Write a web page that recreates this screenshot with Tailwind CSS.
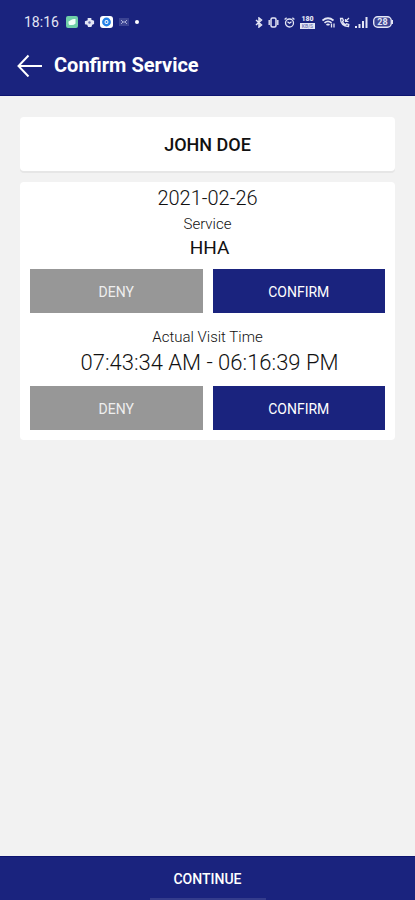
<!DOCTYPE html>
<html lang="en">
<head>
    <meta charset="UTF-8">
    <meta name="viewport" content="width=device-width, initial-scale=1.0">
    <title>Confirm Service</title>
    <script src="https://cdn.jsdelivr.net/npm/@tailwindcss/browser@4"></script>
</head>
<body class="min-h-screen flex flex-col bg-[#f2f2f2] font-['Roboto',sans-serif] text-[#111111]">
    <!-- Header -->
    <header class="bg-[#1a237e] text-white border-b border-[#0d1470]">
        <!-- Status Bar -->
        <div class="flex items-center justify-between h-11 pl-6 pr-[22px] text-[#e4e6f5]">
            <div class="flex items-center">
                <span class="text-sm leading-5 mr-[7px]">18:16</span>
                <svg class="w-3 h-3 mr-[6px]" viewBox="0 0 12 12">
                    <rect width="12" height="12" rx="2" fill="#6fcfa8"/>
                    <path d="M2.500 5.500Q4 4.500 5 4q2-1.500 4.500-1V7.500Q8 9 6 9H3.500Q2.500 8.500 2.500 7z" fill="#f1fff8"/>
                </svg>
                <svg class="w-[11px] h-[11px] mr-[5px]" viewBox="0 0 12 12" fill="#e4e6f5">
                    <path d="M4 1h4v2l3 1v3.500L9 8.500 8 11H4.500L3.500 8.500 1 8V4.500L4 3.500z"/>
                    <circle cx="6" cy="6" r="1.300" fill="#6870b0"/>
                </svg>
                <svg class="w-[13px] h-3 mr-[6px]" viewBox="0 0 13 12">
                    <rect width="13" height="12" rx="3" fill="#fff"/>
                    <circle cx="6.500" cy="6" r="3.200" fill="none" stroke="#2583e8" stroke-width="2.400"/>
                    <circle cx="6.500" cy="6" r="1" fill="#2583e8"/>
                </svg>
                <svg class="w-[10px] h-[10px] mr-[6px]" viewBox="0 0 10 10">
                    <rect y="1" width="10" height="8" fill="#3b4392"/>
                    <path d="M2 3l2 2-2 2M8 3L6 5l2 2M4 5h2" fill="none" stroke="#a7acd6"/>
                </svg>
                <svg class="w-1 h-1" viewBox="0 0 4 4"><circle cx="2" cy="2" r="2" fill="#fff"/></svg>
            </div>
            <div class="flex items-center">
                <svg class="w-2 h-[11px] mr-[5px]" viewBox="0 0 8 11" fill="none" stroke="currentColor" stroke-width="1.500">
                    <path d="M1 3l5.500 5L4 10V1l2.500 2L1 8"/>
                </svg>
                <svg class="w-[11px] h-[11px] mr-[5px]" viewBox="0 0 11 11" fill="none" stroke="currentColor">
                    <rect x="3" y="1" width="5" height="9" rx="1.500" stroke-width="1.500"/>
                    <path d="M1.200 3v5M9.800 3v5" stroke-width="1.400"/>
                </svg>
                <svg class="w-[11px] h-[11px] mr-[5px]" viewBox="0 0 11 11" fill="none" stroke="currentColor" stroke-width="1.300">
                    <circle cx="5.500" cy="6" r="4"/>
                    <path d="M.6 2.500L2.600.8M10.400 2.500L8.400.8M3.500 4.800l2 1.500 2-1.500"/>
                </svg>
                <svg class="w-[15px] h-[13px] mr-[7px]" viewBox="0 0 15 13" fill="currentColor">
                    <rect y="7" width="15" height="6"/>
                    <text x="7.500" y="5" text-anchor="middle" font-size="7" font-weight="900">180</text>
                    <text x="7.500" y="12" text-anchor="middle" font-size="5" font-weight="700" fill="#7f86bf">KB/S</text>
                </svg>
                <svg class="w-[13px] h-[11px] mr-1" viewBox="0 0 13 11" fill="none" stroke="currentColor" stroke-width="1.700">
                    <path d="M.5 3.500q5.500-4.500 11 0M2.500 5.800q3.500-2.800 7 0M4.500 8q1.500-1.200 3 0"/>
                    <path d="M9.500 10.500V6.500M12 6.500v4" stroke-width="1.300"/>
                </svg>
                <svg class="w-[11px] h-[11px] mr-[5px]" viewBox="0 0 11 11" fill="none" stroke="currentColor">
                    <path d="M1.500 1.500q0 7.500 8 8L9.800 7.500 7.500 6.800 6.500 7.800Q4 6.500 3.500 4.500l1-1L3.500 1.500z" stroke-width="1.300"/>
                    <path d="M10 1L6.500 4.500M6.500 2v2.500H9.500" stroke-width="1.200"/>
                </svg>
                <svg class="w-[13px] h-[11px] mr-[5px]" viewBox="0 0 13 11" fill="currentColor">
                    <rect y="9" width="2" height="2"/>
                    <rect x="3.500" y="7" width="2" height="4"/>
                    <rect x="7" y="4" width="2" height="7"/>
                    <rect x="10.500" y="0" width="2" height="11"/>
                </svg>
                <svg class="w-5 h-3" viewBox="0 0 20 12">
                    <rect x=".7" y=".7" width="17.600" height="10.600" rx="4" fill="#3b4392" stroke="currentColor" stroke-width="1.400"/>
                    <rect x="18.600" y="4" width="1.400" height="4" fill="currentColor"/>
                    <text x="9.500" y="9.200" text-anchor="middle" font-size="9" font-weight="700" fill="currentColor">28</text>
                </svg>
            </div>
        </div>
        <!-- Title Bar -->
        <div class="flex items-center h-[42px] mb-[9px] pl-[17px]">
            <button type="button" aria-label="Back" class="mr-3">
                <svg class="w-[25px] h-6" viewBox="0 0 25 24" fill="none" stroke="currentColor" stroke-width="2">
                    <path d="M25 13H2M11.500 2.500L1.500 13l10 10.500"/>
                </svg>
            </button>
            <h1 class="text-xl leading-6 font-bold">Confirm Service</h1>
        </div>
    </header>

    <!-- Main Content -->
    <main class="flex-1 flex flex-col gap-[11px] px-5 pt-[21px]">
        <div class="bg-white rounded-sm shadow-[0_2px_0_#e6e6e6] pt-4 pb-[14px] text-center">
            <h2 class="text-lg leading-6 font-medium">JOHN DOE</h2>
        </div>

        <section class="bg-white rounded-sm px-[10px] pt-1 pb-[10px] text-center">
            <p class="text-xl leading-6 font-light">2021-02-26</p>
            <p class="text-[15px] leading-6 mt-[2px] font-light">Service</p>
            <p class="text-[19px] leading-6 pl-1">HHA</p>
            <div class="grid grid-cols-2 gap-[10px] mt-[9px]">
                <button type="button" class="h-11 pt-[2px] bg-[#979797] text-[#eeeeee] text-sm">DENY</button>
                <button type="button" class="h-11 pt-[2px] bg-[#1a237e] text-white text-sm">CONFIRM</button>
            </div>

            <p class="text-[15px] leading-6 mt-3 font-light">Actual Visit Time</p>
            <p class="text-[22px] leading-6 mt-[2px] pl-1 font-light">07:43:34 AM - 06:16:39 PM</p>
            <div class="grid grid-cols-2 gap-[10px] mt-[11px]">
                <button type="button" class="h-11 pt-[2px] bg-[#979797] text-[#eeeeee] text-sm">DENY</button>
                <button type="button" class="h-11 pt-[2px] bg-[#1a237e] text-white text-sm">CONFIRM</button>
            </div>
        </section>
    </main>

    <!-- Footer -->
    <footer class="bg-[#1a237e] border-t border-[#0d1470]">
        <button type="button" class="block w-full h-[41px] pt-[2px] text-white text-sm font-medium">CONTINUE</button>
        <div class="h-[2px] w-[116px] mx-auto bg-[#343c8c]"></div>
    </footer>
</body>
</html>
